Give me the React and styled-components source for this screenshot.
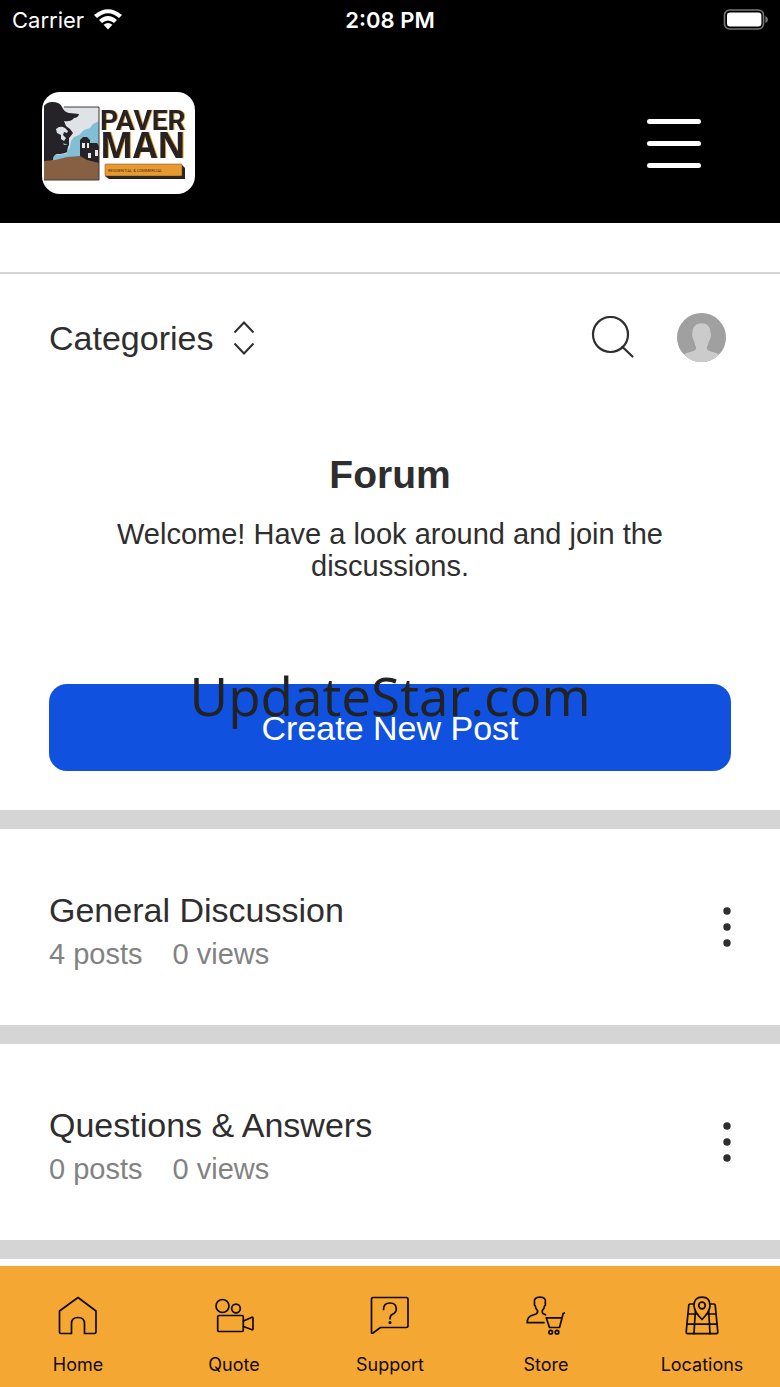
import React from 'react'
import styled, { createGlobalStyle } from 'styled-components'

const GlobalStyle = createGlobalStyle`
  * { box-sizing: border-box; }
  body {
    margin: 0;
    background: #fff;
    color: #2f2e2e;
    font-family: "Liberation Sans", Arial, sans-serif;
  }
  button {
    font-family: inherit;
    border: none;
    padding: 0;
    background: none;
    color: inherit;
    cursor: pointer;
  }
  h1, h2, p { margin: 0; font-weight: 400; }
  svg { display: block; }
`

const Page = styled.div`
  display: flex;
  flex-direction: column;
  min-height: 100vh;
`

const StatusBar = styled.div`
  display: grid;
  grid-template-columns: 1fr auto 1fr;
  align-items: center;
  height: 40px;
  padding: 0 12px;
  background: #000;
  color: #fff;
  font-family: Inter, sans-serif;
  font-size: 22px;
  line-height: 24px;
`

const Carrier = styled.div`
  display: flex;
  align-items: center;
  gap: 10px;
`

const Clock = styled.div`
  font-weight: 600;
`

const BatteryWrap = styled.div`
  justify-self: end;
`

const Header = styled.header`
  display: flex;
  align-items: center;
  justify-content: space-between;
  padding: 52px 79px 29px 42px;
  background: #000;
`

const LogoLettering = styled.g`
  fill: #282322;
  font-weight: 700;
  filter: drop-shadow(1px 0 0 #e6a135);
`

const MenuButton = styled.button`
  display: flex;
  flex-direction: column;
  gap: 17px;
  width: 54px;
`

const MenuLine = styled.span`
  height: 5px;
  width: 100%;
  border-radius: 3px;
  background: #fff;
`

const Main = styled.main`
  flex: 1;
  padding-top: 49px;
`

const Toolbar = styled.div`
  display: flex;
  align-items: center;
  justify-content: space-between;
  height: 129px;
  padding: 0 54px 0 49px;
  border-top: 2px solid #d5d5d5;
`

const CategoriesButton = styled.button`
  display: flex;
  align-items: center;
  gap: 20px;
  font-size: 34px;
  line-height: 40px;
`

const ToolbarActions = styled.div`
  display: flex;
  align-items: center;
  gap: 42px;
`

const Intro = styled.section`
  padding: 50px 49px 39px;
  text-align: center;
`

const Title = styled.h1`
  margin-bottom: 19px;
  font-size: 39px;
  line-height: 48px;
  font-weight: 700;
`

const Welcome = styled.p`
  max-width: 600px;
  margin: 0 auto 102px;
  font-size: 29px;
  line-height: 32px;
`

const CreateArea = styled.div`
  position: relative;
`

const CreateButton = styled.button`
  width: 100%;
  height: 87px;
  border-radius: 18px;
  background: #1052df;
  color: #fff;
  font-size: 34px;
  line-height: 40px;
`

const Watermark = styled.div`
  position: absolute;
  top: -20px;
  left: 0;
  right: 0;
  color: #222;
  font-family: "Open Sans", sans-serif;
  font-size: 53px;
  line-height: 64px;
  pointer-events: none;
`

const Row = styled.article`
  display: flex;
  align-items: center;
  justify-content: space-between;
  height: 215px;
  padding: 0 48px 0 49px;
  border-top: 19px solid #d5d5d5;
`

const RowText = styled.div`
  padding-top: 10px;
`

const RowTitle = styled.h2`
  font-size: 34px;
  line-height: 44px;
`

const RowStats = styled.p`
  display: flex;
  gap: 30px;
  color: #828282;
  font-size: 29px;
  line-height: 44px;
`

const Divider = styled.div`
  height: 19px;
  margin-bottom: 7px;
  background: #d5d5d5;
`

const TabBar = styled.nav`
  display: grid;
  grid-template-columns: repeat(5, 1fr);
  height: 121px;
  background: #f4a732;
`

const Tab = styled.a`
  display: flex;
  flex-direction: column;
  align-items: center;
  gap: 18px;
  padding-top: 29px;
  color: #120b02;
  font-family: Inter, sans-serif;
  font-size: 18px;
  line-height: 24px;
  text-decoration: none;
`

const WifiIcon = () => (
  <svg width="28" height="22" viewBox="0 0 28 22" fill="#fff">
    <path d="M0 6 Q14 -5.6 28 6 L25 9 Q14 -0.4 3 9 Z" />
    <path d="M5 11 Q14 3.2 23 11 L20 14 Q14 9 8 14 Z" />
    <path d="M9.6 15.8 Q14 12.4 18.4 15.8 L14 20.4 Z" />
  </svg>
)

const BatteryIcon = () => (
  <svg width="45" height="22" viewBox="0 0 45 22">
    <rect x="1.5" y="1" width="39" height="19" rx="5" fill="none" stroke="#777" strokeWidth="1.6" />
    <rect x="4" y="3.6" width="34.4" height="14" rx="3" fill="#fff" />
    <path d="M42.4 7 Q45 8.2 45 10.5 Q45 12.8 42.4 14 Z" fill="#777" />
  </svg>
)

const Logo = () => (
  <svg width="153" height="102" viewBox="0 0 153 102" role="img" aria-label="Paver Man">
    <rect width="153" height="102" rx="18" fill="#fff" />
    <path d="M2 15 H57 V88 H2 Z" fill="#dfe2e6" />
    <path d="M57 29 L51 32 L48 36 L42 38 L37 43 L32 45 L29 49 L28 55 L24 62 L12 63 L10 72 H57 Z" fill="#81bfd7" />
    <path
      d="M2 14 Q5 10 10 10 Q18 10 20 15 Q22 20 27 21 L37 22 Q36 26 32 26 Q29 30 22 29 L24 34 L28 37 L31 41 L28 45 L27 46 L27 53 L26 55 L25 60 Q22 62 15 62 Q11 63 11 68 L6 72 L2 76 Z"
      fill="#262328"
    />
    <path d="M14 37 Q18 33 23 36 L26 39 L25 41 L22 40 L21 43 L24 46 L22 49 L19 47 L19 43 L15 41 Z" fill="#dfe2e6" />
    <path d="M21 51 L26 53 L22 53 Z" fill="#81bfd7" />
    <path d="M38 72 V48 L41 45 H45 L48 48 V51 H55 L57 54 V76 H46 L38 69 Z" fill="#262328" />
    <path d="M40 51 H43 V56 H40 Z M45 51 H47 V56 H45 Z M46 61 H49 V66 H46 Z M53 58 H56 V64 H53 Z" fill="#e6e8eb" />
    <path d="M2 69 L13 68 L25 65 L38 64 L45 68 L57 71 V88 H2 Z" fill="#876044" />
    <path d="M22 15 H57 V88 H2" fill="none" stroke="#413936" strokeWidth="1" />
    <LogoLettering>
      <text x="58" y="38" fontFamily="'Liberation Sans Narrow', Roboto, sans-serif" fontSize="28">PAVER</text>
      <text x="58" y="66" fontFamily="'Open Sans', sans-serif" fontSize="35">MAN</text>
    </LogoLettering>
    <path d="M65 73 H140 L143 76 V87 H67 L63 84 Z" fill="#282322" />
    <rect x="63" y="72" width="77" height="12" rx="1" fill="#e79a32" stroke="#704217" strokeWidth="0.5" />
    <text x="66" y="80" fontFamily="'Liberation Sans Narrow', Roboto, sans-serif" fontSize="4" fill="#4b2d12">
      RESIDENTIAL &amp; COMMERCIAL
    </text>
  </svg>
)

const SortIcon = () => (
  <svg width="22" height="36" viewBox="0 0 22 36" fill="none" stroke="#2f2e2e" strokeWidth="2">
    <path d="M1.5 12.5 L11 2.5 L20.5 12.5 M1.5 23.5 L11 33.5 L20.5 23.5" />
  </svg>
)

const SearchIcon = () => (
  <svg width="44" height="44" viewBox="0 0 44 44" fill="none" stroke="#2f2e2e" strokeWidth="2.2" strokeLinecap="round">
    <circle cx="19.5" cy="18.5" r="17.5" />
    <path d="M31.5 31 L41.5 40.5" />
  </svg>
)

const Avatar = () => (
  <svg width="49" height="49" viewBox="0 0 49 49">
    <clipPath id="avatar-clip"><circle cx="24.5" cy="24.5" r="24.5" /></clipPath>
    <g clipPath="url(#avatar-clip)">
      <rect width="49" height="49" fill="#a0a0a0" />
      <path
        d="M15.5 20 C14.5 7 34.5 7 33.5 20 Q34.5 20.5 33.5 25 Q33 27 32 28 Q31 32 30 34 V36 Q31 38 36 39 Q40 40 43 42 V49 H6 V42 Q9 40 13 39 Q18 38 19 36 V34 Q18 32 17 28 Q15.5 26 15 21 Z"
        fill="#cbcbcb"
      />
    </g>
  </svg>
)

const DotsIcon = () => (
  <svg width="10" height="40" viewBox="0 0 10 40" fill="#2f2e2e">
    <circle cx="5" cy="4" r="3.7" />
    <circle cx="5" cy="20" r="3.7" />
    <circle cx="5" cy="36" r="3.7" />
  </svg>
)

const TabIcon = ({ children }) => (
  <svg
    width="40"
    height="40"
    viewBox="0 0 40 40"
    fill="none"
    stroke="#120b02"
    strokeWidth="1.7"
    strokeLinecap="round"
    strokeLinejoin="round"
  >
    {children}
  </svg>
)

const tabs = [
  {
    label: 'Home',
    icon: <path d="M20 2.5 L38 16 V37 Q38 38.5 36.5 38.5 H26.5 V28.5 Q26.5 22.5 20 22.5 Q13.5 22.5 13.5 28.5 V38.5 H3 Q1.5 38.5 1.5 37 V16 Z" />,
  },
  {
    label: 'Quote',
    icon: (
      <>
        <circle cx="8.5" cy="11" r="6.5" />
        <circle cx="22" cy="13.5" r="4.3" />
        <rect x="3.7" y="20.5" width="25.6" height="16" rx="1.2" />
        <path d="M29.5 26 L38 22.2 Q39 22.2 39 23.2 V34 Q39 35 38 34.7 L29.5 31.5" />
      </>
    ),
  },
  {
    label: 'Support',
    icon: (
      <>
        <path d="M3 2.5 H36.5 Q38 2.5 38 4 V31 Q38 32.5 36.5 32.5 H10.5 L3 38 Q1.5 38.7 1.5 37.2 V4 Q1.5 2.5 3 2.5 Z" />
        <path d="M13.5 14.5 Q13.5 8 20 8 Q26.3 8 26.3 14 Q26.3 17.5 22.5 19.3 Q20 20.5 20 23.8" />
        <circle cx="20" cy="27.6" r="0.7" fill="#120b02" />
      </>
    ),
  },
  {
    label: 'Store',
    icon: (
      <>
        <path d="M18 27.7 H1.2 Q1.2 22.5 5 20.8 L10 19 Q12 18 11.5 15.5 Q9.5 13.5 9.3 11 Q8 10.5 8.5 8 Q7.3 2.2 14 2.2 Q20.5 2.2 19.3 8 Q19.8 10.5 18.5 11 Q18.3 13.5 16.3 15.5 Q15.8 18 17.3 18.8 L19.5 19.8" />
        <path d="M38.3 18 L37.2 18.5 L33.5 32.5 H23.5 L20.2 22.8 H36" />
        <circle cx="24.7" cy="37.2" r="1.8" />
        <circle cx="31" cy="37.2" r="1.8" />
      </>
    ),
  },
  {
    label: 'Locations',
    icon: (
      <>
        <path d="M20 24.5 Q12 16.5 12 10.5 Q12 2.2 20 2.2 Q28 2.2 28 10.5 Q28 16.5 20 24.5 Z" />
        <circle cx="20" cy="10.5" r="3.3" />
        <path d="M12 9 H8 Q7 9 6.8 10 L4.2 37 Q4.2 38.7 5.5 38.7 H34.5 Q35.8 38.7 35.8 37 L33.2 10 Q33 9 32 9 H28" />
        <path d="M6 19 H15.5 M24.5 19 H34 M5 29.2 H35 M13.3 16 L12 38.7 M26.7 16 L28 38.7" />
      </>
    ),
  },
]

const ForumRow = ({ title, posts, views }) => (
  <Row>
    <RowText>
      <RowTitle>{title}</RowTitle>
      <RowStats>
        <span>{posts} posts</span>
        <span>{views} views</span>
      </RowStats>
    </RowText>
    <button type="button" aria-label={`${title} options`}>
      <DotsIcon />
    </button>
  </Row>
)

const App = () => {
  return (
    <Page>
      <GlobalStyle />
      <StatusBar>
        <Carrier>Carrier <WifiIcon /></Carrier>
        <Clock>2:08 PM</Clock>
        <BatteryWrap><BatteryIcon /></BatteryWrap>
      </StatusBar>
      <Header>
        <Logo />
        <MenuButton type="button" aria-label="Menu">
          <MenuLine />
          <MenuLine />
          <MenuLine />
        </MenuButton>
      </Header>
      <Main>
        <Toolbar>
          <CategoriesButton type="button">Categories <SortIcon /></CategoriesButton>
          <ToolbarActions>
            <button type="button" aria-label="Search"><SearchIcon /></button>
            <button type="button" aria-label="Account"><Avatar /></button>
          </ToolbarActions>
        </Toolbar>
        <Intro>
          <Title>Forum</Title>
          <Welcome>Welcome! Have a look around and join the discussions.</Welcome>
          <CreateArea>
            <CreateButton type="button">Create New Post</CreateButton>
            <Watermark>UpdateStar.com</Watermark>
          </CreateArea>
        </Intro>
        <ForumRow title="General Discussion" posts={4} views={0} />
        <ForumRow title="Questions & Answers" posts={0} views={0} />
        <Divider />
      </Main>
      <TabBar>
        {tabs.map((tab) => (
          <Tab key={tab.label} href="#">
            <TabIcon>{tab.icon}</TabIcon>
            {tab.label}
          </Tab>
        ))}
      </TabBar>
    </Page>
  )
}

export default App
